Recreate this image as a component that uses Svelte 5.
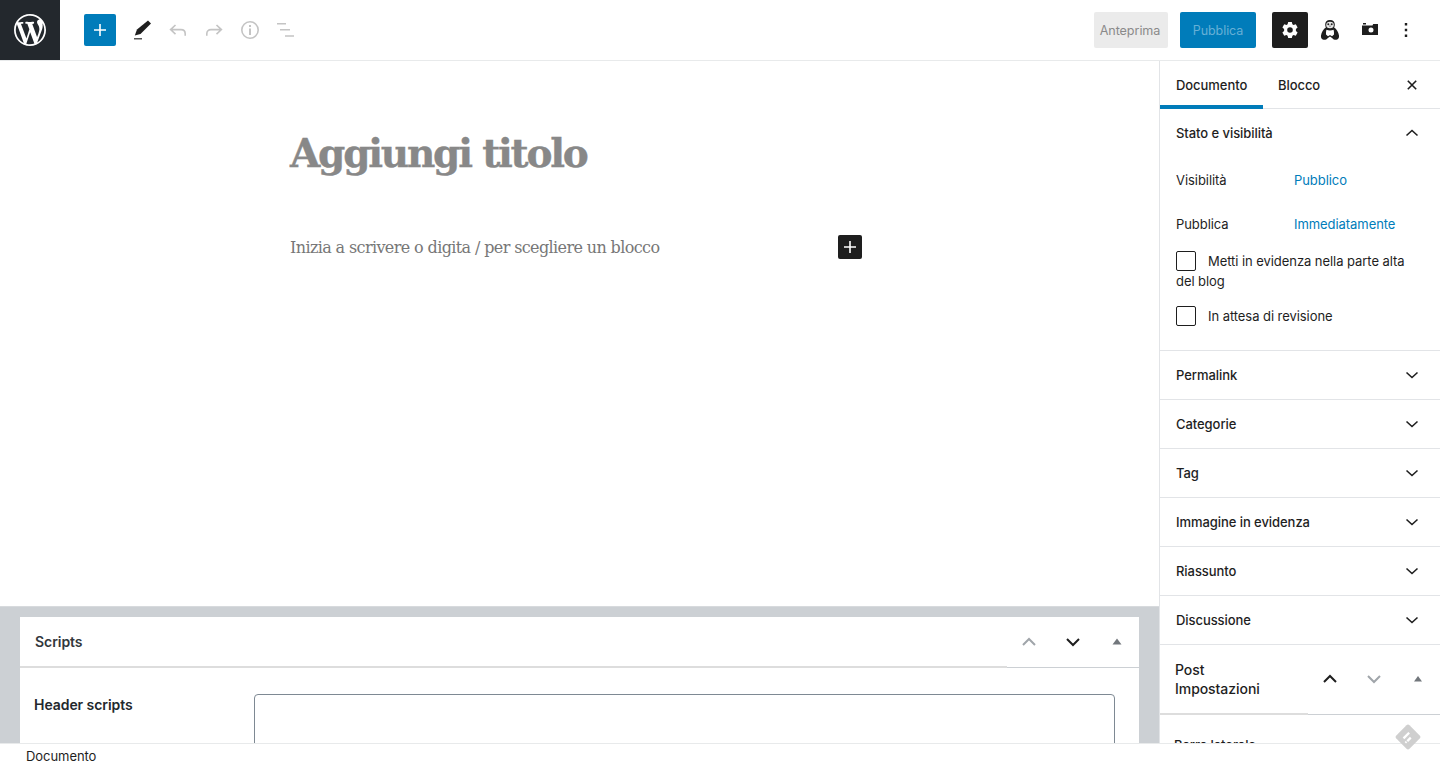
<script>
  const panels = ['Permalink', 'Categorie', 'Tag', 'Immagine in evidenza', 'Riassunto', 'Discussione'];
</script>

<div class="page">
  <header class="topbar">
    <div class="left">
      <div class="logo">
        <svg viewBox="0 0 20 20" width="32" height="32" fill="#fff"><path d="M20 10c0-5.51-4.49-10-10-10C4.48 0 0 4.49 0 10c0 5.52 4.48 10 10 10 5.51 0 10-4.48 10-10zM7.78 15.37L4.37 6.22c.55-.02 1.17-.08 1.17-.08.5-.06.44-1.13-.06-1.11 0 0-1.45.11-2.37.11-.18 0-.37 0-.58-.01C4.12 2.69 6.87 1.11 10 1.11c2.33 0 4.45.87 6.05 2.34-.68-.11-1.65.39-1.65 1.58 0 .74.45 1.36.9 2.1.35.61.55 1.36.55 2.46 0 1.49-1.4 5-1.4 5l-3.03-8.37c.54-.02.82-.17.82-.17.5-.05.44-1.25-.06-1.22 0 0-1.44.12-2.38.12-.87 0-2.33-.12-2.33-.12-.5-.03-.56 1.2-.06 1.22l.92.08 1.26 3.41zM17.41 10c.24-.64.74-1.87.43-4.25.7 1.29 1.05 2.71 1.05 4.25 0 3.29-1.73 6.24-4.4 7.78.97-2.59 1.94-5.2 2.92-7.78zM6.1 18.09C3.12 16.65 1.11 13.53 1.11 10c0-1.3.23-2.48.72-3.59C3.25 10.3 4.67 14.2 6.1 18.09zm4.03-6.63l2.58 6.98c-.86.29-1.76.45-2.71.45-.79 0-1.57-.11-2.29-.33.81-2.38 1.62-4.74 2.42-7.1z"/></svg>
      </div>
      <button class="add" aria-label="Aggiungi blocco">
        <svg viewBox="0 0 24 24" width="24" height="24" fill="#fff"><path d="M18 11.2h-5.2V6h-1.6v5.2H6v1.600h5.200V18h1.600v-5.200H18z"/></svg>
      </button>
      <span class="tool pen">
        <svg viewBox="0 0 24 24" width="24" height="24" fill="#1e1e1e"><path d="M21 5.500 18 2.500 7 11.500 4.800 17.500 10.500 16z"/><path d="M4 20h8v1.500H4z" fill="#555"/></svg>
      </span>
      <span class="tool">
        <svg viewBox="0 0 24 24" width="24" height="24" fill="none" stroke="#c4c4c4" stroke-width="1.600"><path d="M9.500 7 4.600 11.600l4.900 4.600M5 11.600h10c2.600 0 4.200 1.600 4.200 4.200v2"/></svg>
      </span>
      <span class="tool">
        <svg viewBox="0 0 24 24" width="24" height="24" fill="none" stroke="#c4c4c4" stroke-width="1.600"><path d="M14.500 7l4.900 4.600-4.900 4.600M19 11.600H9c-2.600 0-4.200 1.600-4.200 4.200v2"/></svg>
      </span>
      <span class="tool">
        <svg viewBox="0 0 24 24" width="24" height="24" fill="none" stroke="#c4c4c4" stroke-width="1.600"><circle cx="12" cy="12" r="8.200"/><path d="M12 10.500V17" stroke-width="2"/><path d="M12 7v2" stroke-width="2"/></svg>
      </span>
      <span class="tool">
        <svg viewBox="0 0 24 24" width="24" height="24" fill="#c4c4c4"><path d="M3 5h9v1.500H3zM6 11h10v1.500H6zM11 17.200h9v1.500h-9z"/></svg>
      </span>
    </div>
    <div class="right">
      <span class="preview">Anteprima</span>
      <span class="publish">Pubblica</span>
      <span class="settings">
        <svg viewBox="0 0 24 24" width="24" height="24" fill="#fff"><path fill-rule="evenodd" d="M10.200 4h3.600l.6 2.300 1.100.6 2.300-.6 1.800 3.100-1.700 1.700v1.800l1.700 1.700-1.800 3.100-2.300-.6-1.100.6-.6 2.300h-3.600l-.6-2.300-1.100-.6-2.300.6-1.800-3.100 1.700-1.700v-1.800L4.400 9.400l1.800-3.100 2.300.6 1.100-.6zM12 9.200a2.800 2.800 0 1 0 0 5.600 2.800 2.800 0 0 0 0-5.600z"/></svg>
      </span>
      <span class="penguin">
        <svg viewBox="0 0 24 24" width="24" height="24"><path fill="#1e1e1e" d="M12 2C8.800 2 7.200 4 7.200 6.600c0 1.300.3 2.200.7 3C5.600 11 3.500 14 3 17.500c-.3 2 .5 4 2.600 4.300 1.800.2 3.100-.6 4-1.600l2.400-1.600 2.400 1.600c.9 1 2.200 1.800 4 1.600 2.100-.3 2.900-2.300 2.600-4.300-.5-3.500-2.600-6.500-4.900-7.900.4-.8.700-1.700.7-3C16.800 4 15.200 2 12 2z"/><ellipse cx="12" cy="7" rx="3.800" ry="3.300" fill="#e8e8e8"/><circle cx="10.300" cy="6.300" r="1" fill="#222"/><circle cx="13.700" cy="6.300" r="1" fill="#222"/><path d="M11.200 7.800h1.600L12 9z" fill="#222"/><path fill="#fff" d="M8.400 11.700c2 .9 5.200.9 7.200 0 .4 1.400.5 3.200.4 4.800l-2 1.700-2-1.100-2 1.100-2-1.700c-.1-1.600 0-3.400.4-4.800z"/></svg>
      </span>
      <span class="camera">
        <svg viewBox="0 0 24 24" width="24" height="24"><path fill="#1e1e1e" fill-rule="evenodd" d="M4 7.500h10.500l.7-1.500H20v11H4zM13 9.500a2.500 2.500 0 1 0 0 5 2.500 2.500 0 0 0 0-5zM5 5h3v1.500H5z"/></svg>
      </span>
      <span class="more">
        <svg viewBox="0 0 24 24" width="24" height="24" fill="#1e1e1e"><path d="M10.800 5h2.400v2.400h-2.400zM10.800 10.800h2.400v2.400h-2.400zM10.800 16.600h2.400V19h-2.400z"/></svg>
      </span>
    </div>
  </header>

  <div class="body">
    <main class="editor">
      <div class="canvas">
        <div class="column">
          <h1>Aggiungi titolo</h1>
          <div class="para">
            <p>Inizia a scrivere o digita / per scegliere un blocco</p>
            <span class="inline-add">
              <svg viewBox="0 0 24 24" width="24" height="24" fill="#fff"><path d="M18 11.200h-5.200V6h-1.600v5.200H6v1.600h5.200V18h1.600v-5.200H18z"/></svg>
            </span>
          </div>
        </div>
      </div>
      <section class="metaboxes">
        <div class="metabox">
          <div class="mb-head">
            <h2>Scripts</h2>
            <div class="mb-controls">
              <svg viewBox="0 0 24 24" width="24" height="24" fill="none" stroke="#a0a5aa" stroke-width="2"><path d="M6 15l6-6 6 6"/></svg>
              <svg viewBox="0 0 24 24" width="24" height="24" fill="none" stroke="#1e1e1e" stroke-width="2"><path d="M6 9l6 6 6-6"/></svg>
              <svg viewBox="0 0 24 24" width="24" height="24" fill="#72777c"><path d="M7.500 14.500 12 8.500l4.500 6z"/></svg>
            </div>
          </div>
          <div class="mb-body">
            <div class="mb-label">Header scripts</div>
            <div class="textarea"></div>
          </div>
        </div>
      </section>
    </main>

    <aside class="sidebar">
      <div class="tabs">
        <span class="tab active">Documento</span>
        <span class="tab">Blocco</span>
        <svg class="close" viewBox="0 0 24 24" width="24" height="24" fill="none" stroke="#1e1e1e" stroke-width="1.600"><path d="M7.800 7.800l8.400 8.400M16.200 7.800l-8.400 8.400"/></svg>
      </div>
      <section class="status">
        <div class="panel-head first">
          <span>Stato e visibilità</span>
          <svg viewBox="0 0 24 24" width="24" height="24" fill="none" stroke="#1e1e1e" stroke-width="1.600"><path d="M6.500 14.500 12 9.500l5.500 5"/></svg>
        </div>
        <div class="row r1"><span class="k">Visibilità</span><a href="#v">Pubblico</a></div>
        <div class="row r2"><span class="k">Pubblica</span><a href="#p">Immediatamente</a></div>
        <div class="check c-a"><span class="box"></span><span class="lbl">Metti in evidenza nella parte alta del blog</span></div>
        <div class="check c-b"><span class="box"></span><span class="lbl">In attesa di revisione</span></div>
      </section>
      {#each panels as p}
        <div class="panel-head item">
          <span>{p}</span>
          <svg viewBox="0 0 24 24" width="24" height="24" fill="none" stroke="#1e1e1e" stroke-width="1.600"><path d="M6.500 9.500l5.500 5 5.500-5"/></svg>
        </div>
      {/each}
      <div class="post-head">
        <div class="post-title">Post Impostazioni</div>
        <div class="post-controls">
          <svg viewBox="0 0 24 24" width="24" height="24" fill="none" stroke="#1e1e1e" stroke-width="2"><path d="M6 15l6-6 6 6"/></svg>
          <svg viewBox="0 0 24 24" width="24" height="24" fill="none" stroke="#a0a5aa" stroke-width="2"><path d="M6 9l6 6 6-6"/></svg>
          <svg viewBox="0 0 24 24" width="24" height="24" fill="#72777c"><path d="M8 14.500l4-5.500 4 5.500z"/></svg>
        </div>
      </div>
      <div class="post-body">Barra laterale</div>
    </aside>
  </div>

  <footer class="status-bar">Documento</footer>
  <svg class="feedly" viewBox="0 0 24 24" width="26" height="26"><path fill="#cfcfcf" d="M10.600 1.200a2 2 0 0 1 2.800 0l9.400 9.400a2 2 0 0 1 0 2.800l-9.400 9.400a2 2 0 0 1-2.800 0L1.200 13.400a2 2 0 0 1 0-2.800z"/><path fill="#fff" d="M12.300 7.300l1.500 1.500-5.200 5.200-1.500-1.500zM13.800 11.800l1.500 1.500-3.200 3.200-1.500-1.500zM10 15.600l1.300 1.300-1.100 1.100-1.300-1.300z"/></svg>
</div>

<style>
  :global(body) { margin: 0; background: #fff; }
  * { box-sizing: border-box; }
  .page {
    position: relative;
    width: 1440px; height: 768px; display: flex; flex-direction: column; overflow: hidden;
    font-family: Inter, "Liberation Sans", sans-serif; font-size: 13px; color: #1e1e1e; letter-spacing: -0.06px;
  }
  .topbar {
    height: 61px; flex: none; display: flex; justify-content: space-between;
    border-bottom: 1px solid #e8eaeb;
  }
  .left, .right { display: flex; align-items: center; }
  .logo { width: 60px; height: 60px; background: #23282d; display: flex; align-items: center; justify-content: center; }
  .add { width: 32px; height: 32px; margin-left: 24px; padding: 0; border: 0; border-radius: 2px; background: #007cba; display: flex; align-items: center; justify-content: center; }
  .tool { width: 24px; height: 24px; margin-left: 12px; display: block; }
  .tool svg, .more svg, .penguin svg, .camera svg { display: block; }
  .pen { margin-left: 14px; }
  .right { padding-right: 22px; }
  .preview { width: 74px; height: 36px; background: #ebebeb; border-radius: 2px; color: #8a8a8a; display: flex; align-items: center; justify-content: center; font-size: 12.600px; padding-right: 2px; }
  .publish { width: 76px; height: 36px; margin-left: 12px; background: #007cba; border-radius: 2px; color: #66b0d6; display: flex; align-items: center; justify-content: center; font-size: 12.500px; }
  .settings { width: 36px; height: 36px; margin-left: 16px; background: #1e1e1e; border-radius: 2px; display: flex; align-items: center; justify-content: center; }
  .penguin { margin-left: 10px; }
  .camera { margin-left: 16px; }
  .more { margin-left: 12px; }

  .body { flex: 1; min-height: 0; display: flex; }
  .editor { width: 1159px; flex: none; display: flex; flex-direction: column; overflow: hidden; }
  .canvas { height: 545px; flex: none; }
  .column { width: 610px; margin-left: 275px; padding: 64px 15px 0 14px; }
  h1 { margin: 0 0 0 1px; font: 700 39px/56px "DejaVu Serif", serif; color: #888; letter-spacing: -2.200px; -webkit-text-stroke: 0.4px #888; }
  .para { position: relative; margin-top: 52px; height: 28px; }
  .para p { margin: 0; padding: 1px 0 0 1px; font: 16px/28px "DejaVu Serif", serif; color: #777; letter-spacing: -0.620px; }
  .inline-add { position: absolute; left: 549px; top: 2px; width: 24px; height: 24px; background: #1e1e1e; border-radius: 2px; }
  .inline-add svg { display: block; }

  .metaboxes { flex: 1; min-height: 0; background: #ccd0d4; border-top: 1px solid #d7dadd; padding: 10px 20px 0; overflow: hidden; }
  .metabox { background: #fff; height: 200px; }
  .mb-head { height: 51px; display: flex; align-items: center; justify-content: space-between; padding-left: 15px; border-bottom: 1px solid #ccd0d4; position: relative; }
  .mb-head::after { content: ""; position: absolute; left: 0; width: 987px; bottom: -1px; height: 2px; background: #ddd; }
  h2 { margin: 0 0 2px; font-size: 14px; font-weight: 600; color: #32373c; }
  .mb-controls { display: flex; width: 132px; padding-left: 10px; gap: 20px; align-items: center; }
  .mb-controls svg { display: block; }
  .mb-body { display: flex; padding: 26px 24px 0 14px; }
  .mb-label { width: 220px; font-size: 14px; font-weight: 600; line-height: 22px; color: #23282d; }
  .textarea { flex: 1; height: 120px; border: 1px solid #7e8993; border-radius: 4px; }

  .sidebar { width: 281px; flex: none; border-left: 1px solid #e2e4e7; overflow: hidden; }
  .tabs { height: 48px; display: flex; align-items: stretch; border-bottom: 1px solid #e2e4e7; position: relative; }
  .tab { display: flex; align-items: center; font-size: 13px; font-weight: 500; }
  .tab.active { width: 103px; padding-left: 16px; border-bottom: 4px solid #007cba; height: 48px; padding-top: 3px; }
  .tab:not(.active) { margin-left: 15px; }
  .close { position: absolute; right: 16px; top: 12px; }
  .status { height: 242px; border-bottom: 1px solid #e2e4e7; padding: 0 16px; }
  .panel-head { display: flex; align-items: center; justify-content: space-between; font-weight: 500; }
  .panel-head.first { height: 48px; }
  .panel-head svg { display: block; }
  .item { height: 49px; padding: 0 16px; border-bottom: 1px solid #e2e4e7; }
  .row { display: flex; height: 20px; line-height: 20px; }
  .row .k { width: 118px; }
  .row a { color: #007cba; text-decoration: none; }
  .r1 { margin-top: 13px; }
  .r2 { margin-top: 24px; }
  .check { line-height: 20px; position: relative; }
  .check .box { display: inline-block; width: 20px; height: 20px; border: 1px solid #1e1e1e; border-radius: 2px; margin-right: 12px; vertical-align: top; }
  .c-a { margin-top: 17px; }
  .c-b { margin-top: 15px; }
  .post-head { height: 70px; display: flex; align-items: center; justify-content: space-between; position: relative; border-bottom: 1px solid #ccd0d4; padding: 0 0 2px 15px; }
  .post-head::after { content: ""; position: absolute; left: 0; bottom: -1px; width: 148px; height: 2px; background: #ddd; }
  .post-title { width: 110px; font-size: 14px; font-weight: 500; line-height: 19px; }
  .post-controls { display: flex; gap: 20px; padding-right: 10px; margin-top: 1px; }
  .post-controls svg { display: block; }
  .post-body { padding: 22px 14px 0; font-weight: 500; }

  .status-bar { height: 25px; flex: none; position: relative; z-index: 1; background: #fff; border-top: 1px solid #e8eaeb; padding-left: 26px; line-height: 25px; font-size: 13px; }
  .feedly { position: absolute; left: 1395px; top: 724px; z-index: 2; }
</style>
